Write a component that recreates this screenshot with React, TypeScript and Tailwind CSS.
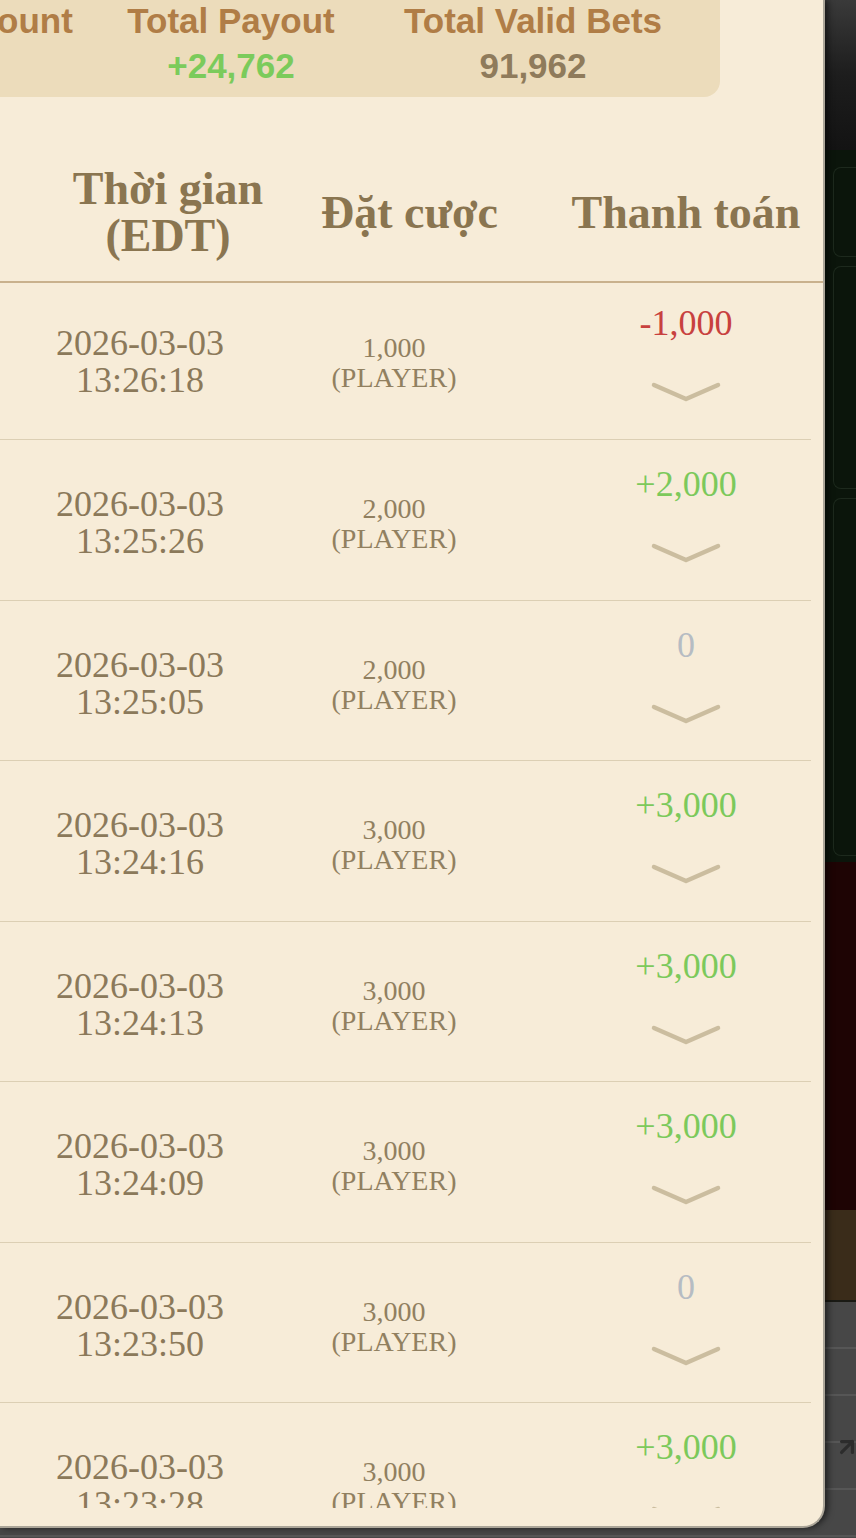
import { ArrowUpRight } from "lucide-react";

type Tone = "win" | "loss" | "zero";

type BetRecord = {
  date: string;
  time: string;
  bet: string;
  side: string;
  payout: string;
  tone: Tone;
};

const records: BetRecord[] = [
  { date: "2026-03-03", time: "13:26:18", bet: "1,000", side: "(PLAYER)", payout: "-1,000", tone: "loss" },
  { date: "2026-03-03", time: "13:25:26", bet: "2,000", side: "(PLAYER)", payout: "+2,000", tone: "win" },
  { date: "2026-03-03", time: "13:25:05", bet: "2,000", side: "(PLAYER)", payout: "0", tone: "zero" },
  { date: "2026-03-03", time: "13:24:16", bet: "3,000", side: "(PLAYER)", payout: "+3,000", tone: "win" },
  { date: "2026-03-03", time: "13:24:13", bet: "3,000", side: "(PLAYER)", payout: "+3,000", tone: "win" },
  { date: "2026-03-03", time: "13:24:09", bet: "3,000", side: "(PLAYER)", payout: "+3,000", tone: "win" },
  { date: "2026-03-03", time: "13:23:50", bet: "3,000", side: "(PLAYER)", payout: "0", tone: "zero" },
  { date: "2026-03-03", time: "13:23:28", bet: "3,000", side: "(PLAYER)", payout: "+3,000", tone: "win" },
];

const toneClass: Record<Tone, string> = {
  win: "text-[#7cc95b]",
  loss: "text-[#c8413e]",
  zero: "text-[#b6bcc3]",
};

function Chevron() {
  return (
    <svg width="70" height="22" viewBox="0 0 70 22" fill="none" className="mx-auto mt-[40px] block">
      <path
        d="M3 4 L35 18 L67 4"
        stroke="#cbbd9f"
        strokeWidth="4.5"
        strokeLinecap="round"
        strokeLinejoin="round"
      />
    </svg>
  );
}

function RecordRow({ record, first }: { record: BetRecord; first: boolean }) {
  return (
    <div className={`flex border-b border-[#dccfb4] ${first ? "h-[157px]" : "h-[160.5px]"}`}>
      <div
        className={`w-[280px] shrink-0 text-center text-[36px] leading-[37px] text-[#8b795a] ${
          first ? "pt-[42px]" : "pt-[46px]"
        }`}
      >
        <div>{record.date}</div>
        <div>{record.time}</div>
      </div>
      <div
        className={`w-[228px] shrink-0 text-center text-[28px] leading-[30px] text-[#918060] ${
          first ? "pt-[50px]" : "pt-[54px]"
        }`}
      >
        <div>{record.bet}</div>
        <div>{record.side}</div>
      </div>
      <div className={`flex-1 pl-[53px] text-center ${first ? "pt-[22px]" : "pt-[26px]"}`}>
        <div className={`text-[36px] leading-[36px] ${toneClass[record.tone]}`}>{record.payout}</div>
        <Chevron />
      </div>
    </div>
  );
}

function SummaryBar() {
  return (
    <div className="-ml-[222px] grid w-[942px] shrink-0 grid-cols-[302px_302px_302px] gap-y-[3px] rounded-br-[16px] bg-[#ecdcbb] pb-[10px] pr-[36px] text-center font-['Liberation_Sans',Arial,sans-serif] text-[35px] font-bold leading-[42px] whitespace-nowrap">
      <div className="text-[#b07d46]">Total Bet Amount</div>
      <div className="text-[#b07d46]">Total Payout</div>
      <div className="text-[#b07d46]">Total Valid Bets</div>
      <div className="text-[#8f7b5b]">91,962</div>
      <div className="text-[#7bcb5b]">+24,762</div>
      <div className="text-[#8f7b5b]">91,962</div>
    </div>
  );
}

function TableHeader() {
  return (
    <div className="flex h-[140px] shrink-0 items-center border-b-2 border-[#c9b18d] text-[46px] font-bold leading-[47px] text-[#8a7550] whitespace-nowrap">
      <div className="w-[321px] shrink-0 pl-[15px] text-center">
        <div>Thời gian</div>
        <div>(EDT)</div>
      </div>
      <div className="w-[176px] shrink-0 text-center">Đặt cược</div>
      <div className="flex-1 pl-[52px] text-center">Thanh toán</div>
    </div>
  );
}

function GameBackdrop() {
  return (
    <div className="flex h-full flex-col">
      <div className="h-[150px] shrink-0 bg-gradient-to-b from-[#3a3a3a] via-[#1d1d1d] to-[#131313]" />
      <div className="flex h-[712px] shrink-0 flex-col gap-[9px] bg-[#0b150b] pl-[833px] pt-[17px]">
        <div className="h-[90px] rounded-l-[8px] border border-r-0 border-[#1d291d]" />
        <div className="h-[223px] rounded-l-[8px] border border-r-0 border-[#1d291d]" />
        <div className="h-[358px] rounded-l-[8px] border border-r-0 border-[#1d291d]" />
      </div>
      <div className="h-[348px] shrink-0 bg-[#1e0404]" />
      <div className="h-[92px] shrink-0 border-b-2 border-[#1a1a14] bg-[#3a2c1a]" />
      <div className="flex flex-1 flex-col bg-[repeating-linear-gradient(to_bottom,#474747_0px,#474747_45px,#565656_45px,#565656_47px)] pl-[834px] pt-[132px]">
        <ArrowUpRight size={26} strokeWidth={3} color="#2c2c2c" />
      </div>
    </div>
  );
}

export default function App() {
  return (
    <div className="relative h-[1538px] w-[856px] overflow-hidden bg-[#3d3d3d]">
      <GameBackdrop />
      <div className="absolute left-0 top-0 flex h-[1528px] w-[825px] flex-col overflow-hidden rounded-br-[22px] border-b-2 border-r-2 border-[#aba598] bg-[#f7ecd8] font-['Liberation_Serif',serif] shadow-[3px_0_6px_rgba(0,0,0,0.55)]">
        <SummaryBar />
        <div className="mt-[46px]">
          <TableHeader />
        </div>
        <div className="mr-[12px] h-[1225px] shrink-0 overflow-hidden">
          {records.map((record, i) => (
            <RecordRow key={record.time} record={record} first={i === 0} />
          ))}
        </div>
      </div>
    </div>
  );
}
